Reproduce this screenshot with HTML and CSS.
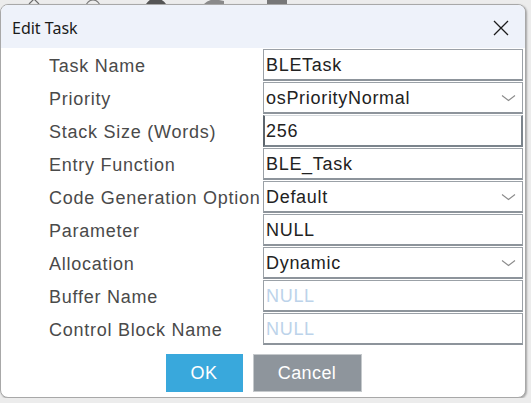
FILE: index.html
```html
<!DOCTYPE html>
<html lang="en">
<head>
  <meta charset="UTF-8">
  <title>Edit Task</title>
  <link rel="stylesheet" href="styles.css">
</head>
<body>

  <!-- toolbar of the app behind the dialog, only its bottom edge shows -->
  <div class="backdrop">
    <svg width="531" height="4" viewBox="0 0 531 4">
      <polyline points="29,4 34,-1 39,4" fill="none" stroke="#6b6b6b" stroke-width="1.2"/>
      <circle cx="93" cy="7" r="7" fill="none" stroke="#7a7a7a" stroke-width="1.2"/>
      <path d="M146 4 Q150 -2 155 -1 L160 -1 Q164 1 166 4 Z" fill="#555"/>
      <path d="M204 4 Q210 -2 219 0 L224 1 L224 4 Z" fill="#8a8a8a"/>
      <rect x="267" y="-2" width="20" height="6" fill="#777"/>
    </svg>
  </div>

  <div class="dialog">
    <div class="titlebar">
      <span class="title">Edit Task</span>
      <svg class="close" width="16" height="16" viewBox="0 0 16 16">
        <path d="M1 1 L15 15 M15 1 L1 15" stroke="#1b1b1b" stroke-width="1.3" fill="none"/>
      </svg>
    </div>

    <div class="body">
      <div class="form">
        <div class="label">Task Name</div>
        <div class="field">BLETask</div>

        <div class="label">Priority</div>
        <div class="field select">osPriorityNormal
          <svg class="chev" width="15" height="8" viewBox="0 0 15 8"><polyline points="1,1.5 7.5,6.5 14,1.5" fill="none" stroke="#8c8c8c" stroke-width="1.1"/></svg>
        </div>

        <div class="label">Stack Size (Words)</div>
        <div class="field focus">256</div>

        <div class="label">Entry Function</div>
        <div class="field">BLE_Task</div>

        <div class="label">Code Generation Option</div>
        <div class="field select">Default
          <svg class="chev" width="15" height="8" viewBox="0 0 15 8"><polyline points="1,1.5 7.5,6.5 14,1.5" fill="none" stroke="#8c8c8c" stroke-width="1.1"/></svg>
        </div>

        <div class="label">Parameter</div>
        <div class="field">NULL</div>

        <div class="label">Allocation</div>
        <div class="field select">Dynamic
          <svg class="chev" width="15" height="8" viewBox="0 0 15 8"><polyline points="1,1.5 7.5,6.5 14,1.5" fill="none" stroke="#8c8c8c" stroke-width="1.1"/></svg>
        </div>

        <div class="label">Buffer Name</div>
        <div class="field empty">NULL</div>

        <div class="label">Control Block Name</div>
        <div class="field empty">NULL</div>
      </div>

      <div class="buttons">
        <button class="btn btn-ok">OK</button>
        <button class="btn btn-cancel">Cancel</button>
      </div>
    </div>
  </div>

</body>
</html>
```

FILE: styles.css
```css
body {
    margin: 0;
    background-color: #ececec;
    font-family: "Liberation Sans", Arial, sans-serif;
}
.backdrop {
    height: 4px;
    overflow: hidden;
}
.backdrop svg {
    display: block;
}
.dialog {
    width: 524px;
    border: 1px solid #a8a8a8;
    border-radius: 8px;
    overflow: hidden;
    background-color: #fff;
    box-shadow: 1px 1px 2px rgba(0, 0, 0, 0.3);
}
.titlebar {
    height: 43px;
    background-color: #eef2fa;
    display: flex;
    align-items: center;
    justify-content: space-between;
    padding: 0 16px 0 11px;
}
.title {
    font-family: "Noto Sans", "Open Sans", sans-serif;
    font-size: 16px;
    color: #1b1b1b;
    padding-top: 2px;
}
.close {
    margin-top: 3px;
}
.body {
    padding: 1px 1px 5px 48px;
}
.form {
    display: grid;
    grid-template-columns: 214px 260px;
    grid-auto-rows: 32px;
    row-gap: 1px;
}
.label {
    font-size: 18px;
    letter-spacing: 0.75px;
    color: #4a4a4a;
    line-height: 30px;
    padding-top: 2px;
    white-space: nowrap;
    overflow: hidden;
}
.field {
    box-sizing: border-box;
    border: 1px solid #9ba1a7;
    border-bottom-width: 2px;
    border-bottom-color: #8d949b;
    padding: 1px 0 0 2px;
    font-size: 18px;
    letter-spacing: 0.7px;
    color: #222;
    line-height: 28px;
    display: flex;
    align-items: center;
    justify-content: space-between;
}
.field.select {
    padding-right: 6px;
}
.chev {
    display: block;
}
.field.focus {
    border-color: #d5d9dd #7b848c #7b848c #5e666e;
    border-width: 1px 2px 2px 2px;
    padding-left: 1px;
}
.field.empty {
    color: #bcd3ea;
}
.buttons {
    display: flex;
    justify-content: center;
    gap: 10px;
    margin-top: 9px;
    padding-right: 46px;
}
.btn {
    height: 38px;
    border: none;
    color: #fff;
    font-family: "Liberation Sans", Arial, sans-serif;
    font-size: 18px;
    letter-spacing: 0.4px;
    padding: 0;
    cursor: pointer;
}
.btn-ok {
    width: 77px;
    background-color: #39a8dc;
}
.btn-cancel {
    width: 109px;
    background-color: #8e959c;
    border: 1px solid #c5c9cc;
}
```
